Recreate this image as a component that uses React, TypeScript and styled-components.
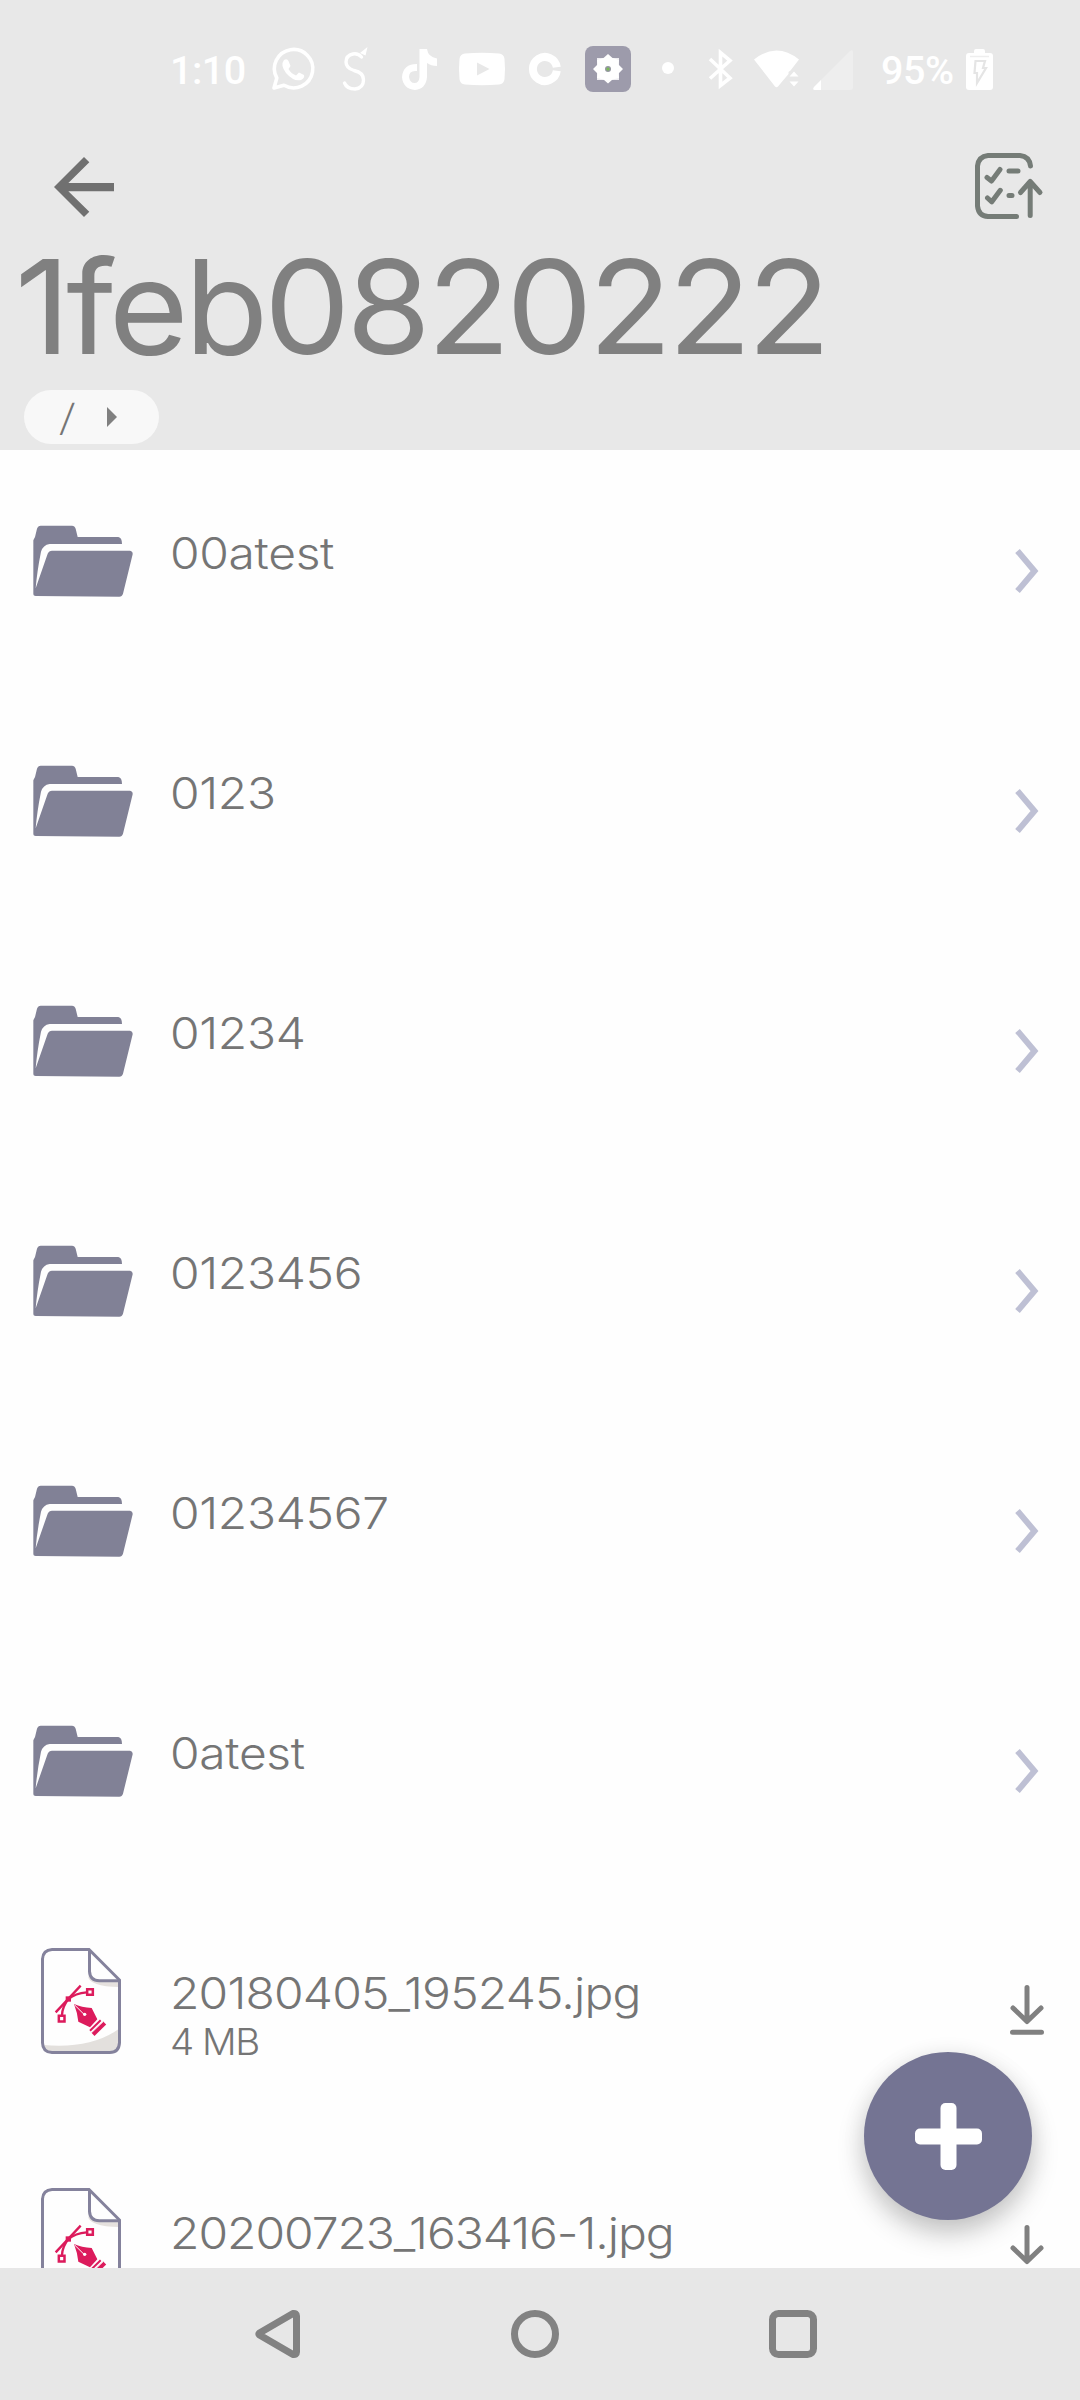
import React from "react";
import styled, { createGlobalStyle } from "styled-components";

const GlobalStyle = createGlobalStyle`
  * { box-sizing: border-box; }
  body { margin: 0; background: #fefefe; }
  svg { display: block; flex: none; overflow: visible; }
`;

const Screen = styled.div`
  position: relative;
  display: flex;
  flex-direction: column;
  width: 1080px;
  height: 2400px;
  overflow: hidden;
  background: #fefefe;
  font-family: Inter, "Liberation Sans", sans-serif;
`;

const Header = styled.header`
  flex: none;
  height: 450px;
  background: #e8e8e8;
`;

const StatusBar = styled.div`
  display: flex;
  align-items: center;
  height: 138px;
  padding-left: 170px;
  color: #fff;
`;

const StatusText = styled.span<{ $width: number; $before?: number }>`
  flex: none;
  width: ${(p) => p.$width}px;
  margin-left: ${(p) => p.$before ?? 0}px;
  padding-top: 3px;
  font: 500 39.5px/48px Roboto, sans-serif;
  letter-spacing: -0.5px;
  white-space: nowrap;
`;

const StatusIcon = styled.svg<{ $before: number }>`
  margin-left: ${(p) => p.$before}px;
`;

const Toolbar = styled.div`
  display: flex;
  align-items: center;
  justify-content: space-between;
  height: 98px;
  padding: 0 36px 0 39px;
`;

const SelectIcon = styled.svg`
  margin-bottom: 2px;
`;

const Title = styled.h1`
  margin: 0;
  padding: 1px 0 0 14px;
  color: #808080;
  font-size: 130.5px;
  font-weight: 400;
  line-height: 140px;
  letter-spacing: -4px;
  white-space: nowrap;
  transform: scaleX(1.05);
  transform-origin: left;
`;

const Breadcrumb = styled.div`
  display: flex;
  align-items: center;
  width: 135px;
  height: 54px;
  margin: 13px 0 0 24px;
  padding-left: 37px;
  border-radius: 27px;
  background: #f8f8f8;
  color: #757575;
`;

const Slash = styled.span`
  width: 15px;
  font-size: 37px;
  font-weight: 300;
  transform: skewX(-7deg);
`;

const Caret = styled.svg`
  margin-left: 31px;
`;

const List = styled.ul`
  flex: 1;
  min-height: 0;
  margin: 0;
  padding: 0;
  overflow: hidden;
  list-style: none;
`;

const Row = styled.li`
  display: flex;
  align-items: flex-start;
  height: 240px;
`;

const Leading = styled.div<{ $top: number; $left: number }>`
  flex: none;
  width: 170px;
  padding: ${(p) => p.$top}px 0 0 ${(p) => p.$left}px;
`;

const Label = styled.div`
  flex: 1;
  padding-top: 77px;
  color: #757575;
  font-weight: 300;
  white-space: nowrap;
`;

const Name = styled.div<{ $spacing: number }>`
  font-size: 44px;
  line-height: 52px;
  letter-spacing: ${(p) => p.$spacing}px;
  transform: scaleX(1.09);
  transform-origin: left;
`;

const Size = styled.div`
  font-size: 37px;
  line-height: 45px;
  letter-spacing: -1.4px;
  transform: scaleX(1.04);
  transform-origin: left;
`;

const Trailing = styled.div<{ $top: number; $right: number }>`
  flex: none;
  padding: ${(p) => p.$top}px ${(p) => p.$right}px 0 0;
`;

const NavBar = styled.nav`
  display: flex;
  flex: none;
  align-items: center;
  height: 132px;
  padding-left: 255px;
  background: #e7e7e7;
`;

const NavIcon = styled.svg<{ $before: number }>`
  margin-left: ${(p) => p.$before}px;
`;

const Fab = styled.button`
  position: absolute;
  right: 48px;
  bottom: 180px;
  display: flex;
  align-items: center;
  justify-content: center;
  width: 168px;
  height: 168px;
  padding: 0;
  border: 0;
  border-radius: 50%;
  background: #747493;
  box-shadow: 0 14px 28px rgba(0, 0, 0, 0.2), 0 4px 24px rgba(0, 0, 0, 0.08);
`;

const FolderIcon = () => (
  <svg width="100" height="72" viewBox="0 0 300 216" fill="#818196">
    <path d="M1 208V46L6 36L12 11Q15 2 23 2H117Q125 2 128 11L134 36H256Q267 38 267 57H50Q30 60 24 80Q12 140 8 190L44 86Q48 77 57 77H291Q300 79 299 88L270 206Q267 215 259 215L8 213Q1 213 1 208Z" />
  </svg>
);

const ImageFileIcon = () => (
  <svg width="80" height="106" viewBox="0 0 240 318" fill="none">
    <path d="M141 84Q145 116 235 117V98H175Q150 96 141 84Z" fill="#e5e1de" />
    <path d="M8 291Q150 303 233 243V284Q230 311 206 311H34Q9 309 8 291Z" fill="#e3e0dd" />
    <path d="M33 4.5H144L235.5 96V284Q234 313.5 206 313.5H33Q5 312 4.5 284V33Q6 6 33 4.5Z" stroke="#84829c" strokeWidth="9" />
    <path d="M145.500 6V70Q147 98 175 98H235" stroke="#84829c" strokeWidth="9" />
    <g stroke="#dc1b5c">
      <path d="M44 193L119 113" strokeWidth="7" />
      <path d="M82 153Q103 136 137 133M82 153Q64 176 63 201" strokeWidth="7" />
      <path d="M138.500 123.500h17v17h-17zM53.500 203.500h17v17h-17z" strokeWidth="7.500" fill="#fff" />
      <path d="M147 248L179 217" strokeWidth="6" />
      <path d="M156 259L191 225" strokeWidth="13" />
    </g>
    <path d="M74 145h16v16H74z" fill="#dc1b5c" />
    <path d="M99 168Q122 179 152 180L169 214L147 238L112 221Q109 193 99 168Z" fill="#dc1b5c" />
    <path d="M101 171L129 199" stroke="#fff" strokeWidth="3" />
    <circle cx="131" cy="199" r="5" fill="#fff" />
    <path d="M152 254L186 222" stroke="#fff" strokeWidth="2" />
  </svg>
);

const ChevronIcon = () => (
  <svg width="24" height="44" viewBox="0 0 24 44" fill="none">
    <path d="M2.500 2L19.500 22L2.500 42" stroke="#bec0d4" strokeWidth="6" />
  </svg>
);

const DownloadIcon = () => (
  <svg width="34" height="50" viewBox="0 0 34 50" fill="none" stroke="#808080" strokeWidth="5" strokeLinecap="round" strokeLinejoin="round">
    <path d="M17 2.500V36M3 23L17 36.500L31 23M2.500 47.200H31.500" />
  </svg>
);

type Entry = { name: string; image?: boolean; size?: string; spacing?: number };

const entries: Entry[] = [
  { name: "00atest" },
  { name: "0123" },
  { name: "01234" },
  { name: "0123456" },
  { name: "01234567" },
  { name: "0atest" },
  { name: "20180405_195245.jpg", image: true, size: "4 MB", spacing: -0.75 },
  { name: "20200723_163416-1.jpg", image: true, spacing: -0.95 },
];

const FileRow = ({ name, image, size, spacing = -0.3 }: Entry) => (
  <Row>
    <Leading $top={image ? 58 : 75} $left={image ? 41 : 33}>
      {image ? <ImageFileIcon /> : <FolderIcon />}
    </Leading>
    <Label>
      <Name $spacing={spacing}>{name}</Name>
      {size && <Size>{size}</Size>}
    </Label>
    <Trailing $top={image ? 95 : 99} $right={image ? 36.5 : 41}>
      {image ? <DownloadIcon /> : <ChevronIcon />}
    </Trailing>
  </Row>
);

const SystemStatus = () => (
  <StatusBar>
    <StatusText $width={76}>1:10</StatusText>
    <StatusIcon $before={26} width="42" height="42" viewBox="0 0 42 42" fill="none">
      <path d="M2 40L4.800 30A19.200 19.200 0 1 1 12 37.300Z" stroke="#fff" strokeWidth="3.600" strokeLinejoin="round" />
      <path d="M12 12Q15 10 16.500 13L18.500 18L16.500 21Q19 25.500 24 27.500L27 24.500L32 27Q33 30 29 32Q22 34 14 25Q8 17 12 12Z" fill="#fff" />
    </StatusIcon>
    <StatusIcon $before={29} width="24" height="44" viewBox="0 0 24 44" fill="none">
      <path d="M18.500 10Q15 6 10 7Q3 8.500 3 15Q3 21 11 23.500Q20.500 25.500 20.500 33Q20.500 41 12 42Q4 42 1.500 36" stroke="#fff" strokeWidth="3.400" strokeLinecap="round" />
      <path d="M24.500 0L17 6L22.500 8.500Z" fill="#fff" />
    </StatusIcon>
    <StatusIcon $before={35} width="35" height="41" viewBox="0 0 35 41">
      <path d="M17.500 0H25Q26 8 35 9.500V17Q29 17 25 14V28Q24 40 13 41Q1 40 0 28Q1 15 15 15V22Q7 21 7 28Q8 34 12.500 34Q17 34 17.500 28Z" fill="#fff" />
    </StatusIcon>
    <StatusIcon $before={22} width="46" height="32" viewBox="0 0 46 32">
      <path fillRule="evenodd" d="M6 .5Q23-.8 40 .5Q45 1 45.500 6Q46.500 16 45.500 26Q45 31 40 31.500Q23 32.800 6 31.500Q1 31 .5 26Q-.5 16 .5 6Q1 1 6 .5ZM18 9.500V22.500L30.500 16Z" fill="#fff" />
    </StatusIcon>
    <StatusIcon $before={24} width="32" height="32" viewBox="0 0 32 32" fill="none">
      <path d="M27.800 14.300A12 12 0 1 0 27.800 17.700" stroke="#fff" strokeWidth="8" />
    </StatusIcon>
    <StatusIcon $before={24} width="46" height="46" viewBox="0 0 46 46">
      <rect width="46" height="46" rx="8" fill="#9d9bab" />
      <path d="M12 12H34V34H12Z" fill="#eeedf1" />
      <path d="M23 8L27.500 12L34 14L33.500 18.500L38 23L33.500 27.500L34 32L27.500 33.500L23 37.500L18.500 33.500L12 32L12.500 27.500L8 23L12.500 18.500L12 14L18.500 12Z" fill="#fff" />
      <circle cx="23" cy="23" r="3" fill="#9497a0" />
      <circle cx="23" cy="23" r="1.600" fill="#7aba55" />
    </StatusIcon>
    <StatusIcon $before={31} width="12" height="12" viewBox="0 0 12 12">
      <circle cx="6" cy="5" r="6" fill="#fff" />
    </StatusIcon>
    <StatusIcon $before={34} width="25" height="38" viewBox="0 0 25 38" fill="none">
      <path d="M2 9L22 28L12.500 35.500V2.500L22 10.500L2 28.500" stroke="#fff" strokeWidth="3.600" />
    </StatusIcon>
    <StatusIcon $before={21} width="45" height="38" viewBox="0 0 45 38" fill="#fff">
      <path d="M0 9.500Q22.500-8.500 45 9.500L36.500 20.500L34.500 22L34.500 24L24 36.500Q22.500 38 21 36.500Z" />
      <path d="M35.500 26.500L40 21.500L44.500 26.500ZM35.500 31.500H44.500L40 36.500Z" />
    </StatusIcon>
    <StatusIcon $before={14} width="40" height="40" viewBox="0 0 40 40">
      <path d="M1 38L37 2Q40 0 40 3V38Q40 41 37 41H2Q-1 41 1 38Z" fill="#eee" />
      <path d="M1 38L8 31V41H2Q-1 41 1 38Z" fill="#fff" />
    </StatusIcon>
    <StatusText $width={72} $before={28}>95%</StatusText>
    <StatusIcon $before={13} width="27" height="41" viewBox="0 0 27 41">
      <path d="M8 4V2Q8 0 10 0H17Q19 0 19 2V4H24Q27 4 27 7V38Q27 41 24 41H3Q0 41 0 38V7Q0 4 3 4Z" fill="#fff" />
      <path d="M4 7.500H23" stroke="#eee" strokeWidth="1.500" />
      <path d="M9.500 12H19L17 19H20L11 34V24H8.500Z" fill="#fff" stroke="#e5e5e5" strokeWidth="2.200" />
    </StatusIcon>
  </StatusBar>
);

export default function App() {
  return (
    <Screen>
      <GlobalStyle />
      <Header>
        <SystemStatus />
        <Toolbar>
          <svg width="90" height="90" viewBox="0 0 24 24" fill="#707070">
            <path d="M20 10.900H7.830l5.590-5.500L12 4l-8 8 8 8 1.410-1.410L7.830 13.100H20z" />
          </svg>
          <SelectIcon width="69" height="66" viewBox="0 0 69 66" fill="none" stroke="#757c77" strokeWidth="5" strokeLinecap="round" strokeLinejoin="round">
            <path d="M41.500 63.500H13Q3.500 63 2.500 53V13Q3.500 3.500 13 2.500H45Q54.500 3.500 55.500 13" />
            <path d="M12 24.500L16.500 28L25 16.500M12.500 45L16.800 48.800L25.300 37.300M34 18H43M34 42.500H37" />
            <path d="M55.200 62.500V29M45.500 39.500L55.200 28.500L65 39.500" />
          </SelectIcon>
        </Toolbar>
        <Title>1feb0820222</Title>
        <Breadcrumb>
          <Slash>/</Slash>
          <Caret width="10" height="20" viewBox="0 0 10 20">
            <path d="M0 0L10 10L0 20Z" fill="#808080" />
          </Caret>
        </Breadcrumb>
      </Header>
      <List>
        {entries.map((entry) => (
          <FileRow key={entry.name} {...entry} />
        ))}
      </List>
      <NavBar>
        <NavIcon $before={0} width="45" height="50" viewBox="0 0 45 50" fill="none" stroke="#828282" strokeWidth="7" strokeLinejoin="round">
          <path d="M4.500 24Q3.500 25 4.500 26L38 45.500Q41.500 46 41.500 43V7Q41.500 4 38 4.500Z" />
        </NavIcon>
        <NavIcon $before={211} width="48" height="48" viewBox="0 0 48 48" fill="none">
          <circle cx="24" cy="24" r="20.500" stroke="#828282" strokeWidth="7" />
        </NavIcon>
        <NavIcon $before={210} width="48" height="48" viewBox="0 0 48 48" fill="none">
          <rect x="3.500" y="3.500" width="41" height="41" rx="6" stroke="#828282" strokeWidth="7" />
        </NavIcon>
      </NavBar>
      <Fab aria-label="Add">
        <svg width="67" height="67" viewBox="0 0 67 67" fill="#fff">
          <rect x="25.500" width="16" height="67" rx="5" />
          <rect y="25.500" width="67" height="16" rx="5" />
        </svg>
      </Fab>
    </Screen>
  );
}
